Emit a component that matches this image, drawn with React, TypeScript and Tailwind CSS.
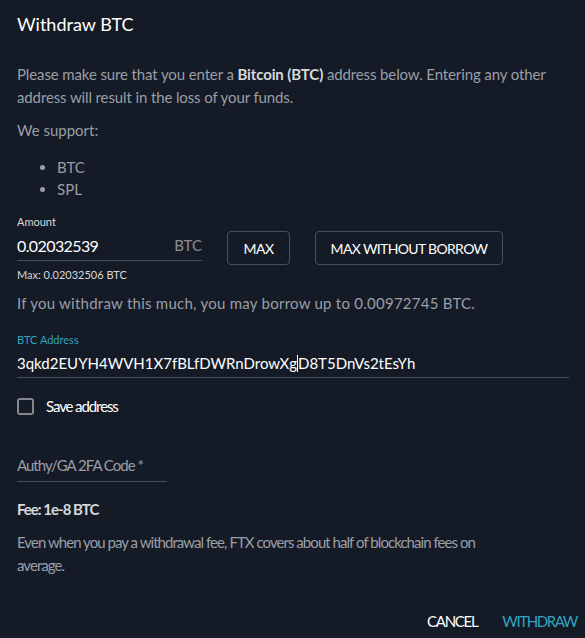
import React from "react";

export default function App() {
  return (
    <div className="w-[585px] h-[638px] bg-[#151b26] text-white overflow-hidden" style={{ fontFamily: "Lato, 'Noto Sans', sans-serif" }}>
      <div className="px-[17px] pt-[13px]">
        <h2 className="text-[18px] leading-[22px] text-white">Withdraw BTC</h2>
        <p className="mt-[28px] text-[15px] leading-[23px] tracking-[-0.12px] text-[#9a9ea6]">
          Please make sure that you enter a <b className="text-[#d6d8dc] font-bold">Bitcoin (BTC)</b> address below. Entering any other address will result in the loss of your funds.
        </p>
        <p className="mt-[10px] text-[15px] leading-[23px] text-[#9a9ea6]">We support:</p>
        <ul className="mt-[14px] list-disc pl-[40px] text-[15px] leading-[22px] text-[#9a9ea6]">
          <li>BTC</li>
          <li>SPL</li>
        </ul>
        <div className="mt-[15px] flex items-start gap-[25px]">
          <div className="w-[185px]">
            <div className="text-[11px] leading-[14px] text-[#d6d8dc]">Amount</div>
            <div className="flex items-center justify-between border-b border-[#4a4e57] h-[32px] pt-[2px]">
              <span className="text-[16px] tracking-[-0.6px] text-white">0.02032539</span>
              <span className="text-[15px] text-[#8a8e96]">BTC</span>
            </div>
            <div className="mt-[7px] text-[11px] leading-[14px] text-[#d6d8dc]">Max: 0.02032506 BTC</div>
          </div>
          <button className="mt-[16px] h-[34px] w-[63px] rounded-[4px] border border-[#4a4e57] text-[14px] tracking-[-0.6px] text-white">MAX</button>
          <button className="mt-[16px] h-[34px] w-[188px] rounded-[4px] border border-[#4a4e57] text-[14px] tracking-[-0.65px] text-white">MAX WITHOUT BORROW</button>
        </div>
        <p className="mt-[10px] text-[15px] leading-[23px] tracking-[0.25px] text-[#9a9ea6]">If you withdraw this much, you may borrow up to 0.00972745 BTC.</p>
        <div className="mt-[18px] w-[552px]">
          <div className="text-[11px] leading-[14px] text-[#2fa4c0]">BTC Address</div>
          <div className="flex items-center border-b border-[#4a4e57] h-[31px] pt-[2px] text-[15px] text-white">
            3qkd2EUYH4WVH1X7fBLfDWRnDrowXg<span className="inline-block w-px h-[17px] bg-white"></span>D8T5DnVs2tEsYh
          </div>
        </div>
        <label className="mt-[20px] flex items-center gap-[12px] h-[17px]">
          <span className="w-[17px] h-[17px] rounded-[3px] border-2 border-[#84878e]"></span>
          <span className="text-[15px] tracking-[-1.1px] text-white">Save address</span>
        </label>
        <div className="mt-[39px] w-[150px] border-b border-[#4a4e57] pb-[4px] text-[15px] leading-[23px] tracking-[-1px] text-[#9a9ea6]">Authy/GA 2FA Code *</div>
        <div className="mt-[16px] text-[15px] leading-[22px] font-bold tracking-[-1px] text-[#d6d8dc]">Fee: 1e-8 BTC</div>
        <p className="mt-[11px] text-[15px] leading-[23px] tracking-[-0.95px] text-[#9a9ea6]">
          Even when you pay a withdrawal fee, FTX covers about half of blockchain fees on
          <br />
          average.
        </p>
      </div>
      <div className="mt-[34px] flex justify-end gap-[25px] pr-[8px]">
        <button className="text-[15px] leading-[20px] tracking-[-1.3px] text-white">CANCEL</button>
        <button className="text-[15px] leading-[20px] tracking-[-1.4px] text-[#2fa4c0]">WITHDRAW</button>
      </div>
    </div>
  );
}
